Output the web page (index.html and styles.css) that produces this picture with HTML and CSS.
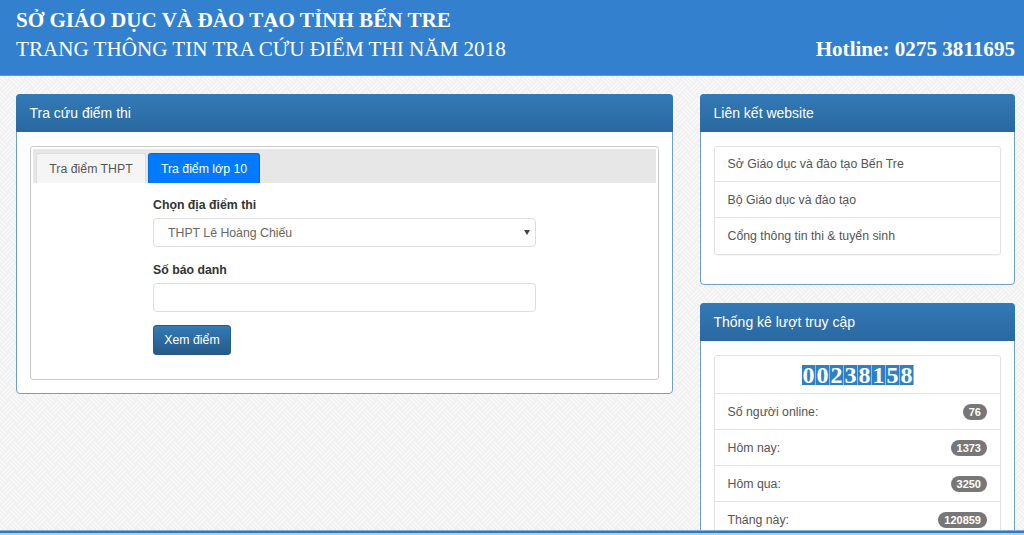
FILE: index.html
```html
<!DOCTYPE html>
<html lang="vi">
<head>
<meta charset="utf-8">
<title>Tra cứu điểm thi</title>
<link rel="stylesheet" href="styles.css">
</head>
<body>
<header class="site-header">
  <div class="titles">
    <div class="title-main">SỞ GIÁO DỤC VÀ ĐÀO TẠO TỈNH BẾN TRE</div>
    <div class="title-sub">TRANG THÔNG TIN TRA CỨU ĐIỂM THI NĂM 2018</div>
  </div>
  <div class="hotline">Hotline: 0275 3811695</div>
</header>
<main class="layout">
  <section class="panel panel-main">
    <h2 class="panel-heading">Tra cứu điểm thi</h2>
    <div class="panel-body">
      <div class="card">
        <div class="tabs">
          <span class="tab">Tra điểm THPT</span>
          <span class="tab tab-active">Tra điểm lớp 10</span>
        </div>
        <form class="form">
          <label class="label">Chọn địa điểm thi</label>
          <div class="select">
            <span>THPT Lê Hoàng Chiếu</span>
            <svg class="caret" width="6" height="5" viewBox="0 0 6 5"><path d="M0 0h6L3 5z" fill="#444"/></svg>
          </div>
          <label class="label label-second">Số báo danh</label>
          <div class="input"></div>
          <button class="btn" type="button">Xem điểm</button>
        </form>
      </div>
    </div>
  </section>
  <aside class="sidebar">
    <section class="panel panel-links">
      <h2 class="panel-heading">Liên kết website</h2>
      <div class="panel-body">
        <ul class="list">
          <li class="item">Sở Giáo dục và đào tạo Bến Tre</li>
          <li class="item">Bộ Giáo dục và đào tạo</li>
          <li class="item">Cổng thông tin thi &amp; tuyển sinh</li>
        </ul>
      </div>
    </section>
    <section class="panel panel-stats">
      <h2 class="panel-heading">Thống kê lượt truy cập</h2>
      <div class="panel-body">
        <ul class="list">
          <li class="item counter"><span class="digit">0</span><span class="digit">0</span><span class="digit">2</span><span class="digit">3</span><span class="digit">8</span><span class="digit">1</span><span class="digit">5</span><span class="digit">8</span></li>
          <li class="item stat"><span>Số người online:</span><span class="badge">76</span></li>
          <li class="item stat"><span>Hôm nay:</span><span class="badge">1373</span></li>
          <li class="item stat"><span>Hôm qua:</span><span class="badge">3250</span></li>
          <li class="item stat"><span>Tháng này:</span><span class="badge">120859</span></li>
        </ul>
      </div>
    </section>
  </aside>
</main>
<div class="footer-line"></div>
</body>
</html>
```

FILE: styles.css
```css
* { box-sizing: border-box; }
html, body { margin: 0; height: 100%; overflow: hidden; }
body {
  font-family: "Liberation Sans", Arial, sans-serif;
  font-size: 12.3px;
  color: #555;
  background-color: #f2f2f2;
  background-image: url("data:image/svg+xml,%3Csvg xmlns='http://www.w3.org/2000/svg' width='16' height='16'%3E%3Cpath fill='none' stroke='%23fff' stroke-width='.9' d='M-2-6L6 2M-6-2L2 6M-4-4L4 4M14-6L22 2M10-2L18 6M12-4L20 4M-2 10L6 18M-6 14L2 22M-4 12L4 20M14 10L22 18M10 14L18 22M12 12L20 20M6 14L14 6M2 10L10 2M4 12L12 4'/%3E%3C/svg%3E");
  display: flex;
  flex-direction: column;
}
.site-header {
  height: 76px;
  flex: none;
  background: #3280ce;
  border-bottom: 1px solid #5a98d6;
  color: #fff;
  font-family: "Liberation Serif", "Times New Roman", serif;
  display: flex;
  justify-content: space-between;
  align-items: flex-end;
  padding: 0 9px 12px 16px;
}
.title-main { font-size: 21.12px; font-weight: 700; line-height: 30px; }
.title-sub { font-size: 21.12px; line-height: 28px; }
.hotline { font-size: 21.12px; font-weight: 700; line-height: 28px; }

.layout {
  flex: 1;
  min-height: 0;
  display: flex;
  align-items: flex-start;
  gap: 27px;
  padding: 18px 9px 0 16px;
}
.panel {
  background: #fff;
  border: 1px solid #6f9fce;
  border-radius: 4px;
}
.panel-main { width: 657px; flex: none; }
.sidebar { flex: 1; min-width: 0; display: flex; flex-direction: column; gap: 18px; }
.panel-heading {
  margin: -1px -1px 0;
  height: 38px;
  padding: 0 13.5px;
  display: flex;
  align-items: center;
  background: linear-gradient(#337ab7, #2a689f);
  border-radius: 4px 4px 0 0;
  color: #fff;
  font-size: 14px;
  font-weight: 400;
}
.panel-body { padding: 14px 13px 13px; }

.card {
  height: 234px;
  border: 1px solid #ccc;
  border-radius: 3px;
  padding: 2px;
}
.tabs {
  height: 34px;
  background: #e7e7e7;
  padding: 4px 3px 0;
  display: flex;
  gap: 2px;
  align-items: stretch;
}
.tab {
  width: 110px;
  border: 1px solid #ddd;
  border-bottom: 0;
  background: #f5f5f5;
  border-radius: 3px 3px 0 0;
  color: #555;
  display: flex;
  align-items: center;
  justify-content: center;
}
.tab-active {
  width: 112px;
  background: #007bff;
  border-color: #0069d9;
  color: #fff;
}
.form {
  padding: 15px 0 0 120px;
  display: flex;
  flex-direction: column;
  align-items: flex-start;
}
.label {
  font-weight: 700;
  color: #333;
  line-height: 14px;
  margin-bottom: 6px;
}
.label-second { margin-top: 16px; }
.select, .input {
  width: 383px;
  height: 29px;
  border: 1px solid #ddd;
  border-radius: 4px;
  background: #fff;
}
.select {
  display: flex;
  align-items: center;
  justify-content: space-between;
  padding: 0 5px 0 14px;
  color: #666;
}
.btn {
  margin-top: 13px;
  width: 78px;
  height: 30px;
  border: 1px solid #265a88;
  border-radius: 3px;
  background: linear-gradient(#337ab7, #265a88);
  color: #fff;
  font: 12.3px "Liberation Sans", Arial, sans-serif;
  padding: 0;
}

.panel-links .panel-body { padding-bottom: 29px; }
.panel-links .item:first-child { height: 35px; }
.list {
  list-style: none;
  margin: 0;
  padding: 0;
  border: 1px solid #e2e2e2;
  border-radius: 3px;
  box-shadow: 0 1px 1px rgba(0,0,0,.05);
}
.item {
  height: 36px;
  padding: 0 13px 0 12.5px;
  display: flex;
  align-items: center;
  color: #555;
  border-bottom: 1px solid #e2e2e2;
}
.item:last-child { border-bottom: 0; }
.counter { height: 38px; justify-content: center; padding: 0; }
.digit {
  width: 14px;
  height: 20px;
  background: #2f7fc4;
  box-shadow: inset -1px 0 #8fbce4;
  color: #fff;
  font: 700 24px/20px "Liberation Serif", serif;
  text-align: center;
}
.stat { justify-content: space-between; }
.badge {
  background: #777;
  color: #fff;
  font-size: 11px;
  font-weight: 700;
  line-height: 16px;
  border-radius: 8px;
  padding: 0 6px;
}
.footer-line {
  position: fixed;
  left: 0;
  right: 0;
  bottom: 0;
  height: 5px;
  background: #337ab7;
  border-top: 1px solid #7fb0de;
  border-bottom: 2px solid #a9d2f3;
}
```
